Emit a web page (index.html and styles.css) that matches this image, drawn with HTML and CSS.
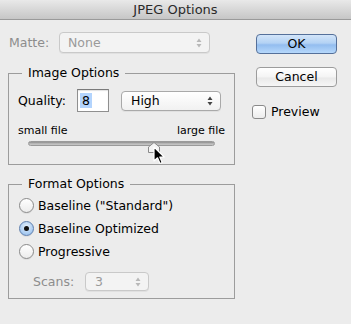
FILE: index.html
```html
<!DOCTYPE html>
<html>
<head>
<meta charset="utf-8">
<link rel="stylesheet" href="styles.css">
</head>
<body>
<div class="window">
  <div class="titlebar">JPEG Options</div>
  <div class="main">
    <div class="left">
      <div class="matte-row">
        <span class="lbl disabled">Matte:</span>
        <div class="select disabled matte-select">
          <span>None</span>
          <svg class="arrows" width="6" height="10" viewBox="0 0 6 10"><path d="M3 0.5 L5.5 4 L0.5 4 Z M3 9.5 L5.5 6 L0.5 6 Z" fill="#b8b8b8"/></svg>
        </div>
      </div>

      <fieldset class="group image-group">
        <legend>Image Options</legend>
        <div class="quality-row">
          <span class="lbl">Quality:</span>
          <div class="input"><span class="hl">8</span></div>
          <div class="select high-select">
            <span>High</span>
            <svg class="arrows" width="6" height="10" viewBox="0 0 6 10"><path d="M3 0.5 L5.5 4 L0.5 4 Z M3 9.5 L5.5 6 L0.5 6 Z" fill="#444"/></svg>
          </div>
        </div>
        <div class="scale"><span>small file</span><span>large file</span></div>
        <div class="slider">
          <div class="track"></div>
          <svg class="thumb" width="12" height="11" viewBox="0 0 12 11"><path d="M6 0.5 L11.5 5 L11.5 10.5 L0.5 10.5 L0.5 5 Z" fill="#f4f4f4" stroke="#8a8a8a"/></svg>
        </div>
      </fieldset>

      <fieldset class="group format-group">
        <legend>Format Options</legend>
        <div class="radio-row"><span class="radio"></span><span>Baseline ("Standard")</span></div>
        <div class="radio-row"><span class="radio on"><span class="dot"></span></span><span>Baseline Optimized</span></div>
        <div class="radio-row"><span class="radio"></span><span>Progressive</span></div>
        <div class="scans-row">
          <span class="lbl disabled">Scans:</span>
          <div class="select disabled scans-select">
            <span>3</span>
            <svg class="arrows" width="6" height="10" viewBox="0 0 6 10"><path d="M3 0.5 L5.5 4 L0.5 4 Z M3 9.5 L5.5 6 L0.5 6 Z" fill="#b8b8b8"/></svg>
          </div>
        </div>
      </fieldset>
    </div>

    <div class="right">
      <div class="btn ok">OK</div>
      <div class="btn cancel">Cancel</div>
      <div class="check-row"><span class="checkbox"></span><span>Preview</span></div>
    </div>
  </div>
  <svg class="cursor" width="13" height="19" viewBox="0 0 13 19"><path d="M1 1 L1 15 L4.5 11.8 L7 17.5 L9.2 16.5 L6.8 11 L11.2 11 Z" fill="#000" stroke="#fff" stroke-width="1.2" stroke-linejoin="round"/></svg>
</div>
</body>
</html>
```

FILE: styles.css
```css
* { box-sizing: border-box; }
html, body { margin: 0; padding: 0; }
body {
  width: 351px;
  height: 324px;
  background: #ececec;
  font-family: "DejaVu Sans", "Liberation Sans", sans-serif;
  font-size: 12.5px;
  color: #000;
  overflow: hidden;
}
.window {
  position: relative;
  width: 351px;
  height: 324px;
  background: #ececec;
}
.titlebar {
  height: 20px;
  line-height: 19px;
  text-align: center;
  font-size: 13px;
  color: #2a2a2a;
  background: linear-gradient(#e9e9e9, #d4d4d4 60%, #c6c6c6);
  border-bottom: 1px solid #9a9a9a;
}
.main {
  display: flex;
  padding-left: 8px;
}
.left {
  width: 227px;
  padding-top: 12px;
}
.right {
  margin-left: 17px;
  padding-top: 14px;
  display: flex;
  flex-direction: column;
  align-items: flex-start;
}
.lbl.disabled { color: #8d8d8d; }

.matte-row {
  display: flex;
  align-items: center;
  height: 21px;
  padding-left: 1px;
}
.matte-row .lbl { width: 50px; }

.select {
  display: flex;
  align-items: center;
  justify-content: space-between;
  border: 1px solid #a9a9a9;
  border-radius: 4px;
  background: linear-gradient(#ffffff, #f1f1f1);
  padding: 0 7px 0 8px;
  box-shadow: 0 1px 0 rgba(0,0,0,0.05);
}
.select.disabled {
  border-color: #c9c9c9;
  background: #f3f3f3;
  color: #9a9a9a;
}
.matte-select { width: 151px; height: 21px; }
.high-select { width: 100px; height: 20px; margin-left: 12px; padding-left: 9px; }
.scans-select { width: 64px; height: 19px; margin-left: 13px; padding-left: 9px; }

.group {
  margin: 12px 0 0 0;
  width: 227px;
  border: 1px solid #9c9c9c;
  border-radius: 0;
  padding: 8px 9px 10px 9px;
  min-width: 0;
}
.group legend {
  margin-left: 4px;
  padding: 0 6px;
  line-height: 16px;
  height: 16px;
  font-size: 12.5px;
}
.quality-row {
  display: flex;
  align-items: center;
  height: 23px;
}
.quality-row .lbl { width: 59px; }
.input {
  width: 32px;
  height: 23px;
  border: 1px solid #8f8f8f;
  border-top-color: #7a7a7a;
  background: #fff;
  padding: 3px 0 0 2px;
  box-shadow: inset 0 1px 1px rgba(0,0,0,0.12);
}
.hl {
  display: inline-block;
  background: #b3d4fd;
  padding: 0 2px;
  line-height: 15px;
}
.scale {
  display: flex;
  justify-content: space-between;
  margin-top: 12px;
  line-height: 14px;
  font-size: 11px;
}
.slider {
  position: relative;
  height: 16px;
  padding: 3px 10px 0 10px;
}
.track {
  height: 5px;
  border-radius: 3px;
  background: linear-gradient(#8e8e8e, #b4b4b4 50%, #c9c9c9);
  border: 1px solid #9a9a9a;
}
.thumb {
  position: absolute;
  left: 130px;
  top: 4px;
}

.format-group {
  margin-top: 11px;
  padding: 2px 9px 7px 9px;
}
.radio-row {
  display: flex;
  align-items: center;
  height: 23px;
  padding-left: 1px;
}
.radio {
  display: flex;
  align-items: center;
  justify-content: center;
  width: 15px;
  height: 15px;
  border-radius: 50%;
  border: 1px solid #8a8a8a;
  background: linear-gradient(#ffffff, #ececec);
  margin-right: 4px;
  box-shadow: 0 1px 0 rgba(0,0,0,0.06);
}
.radio.on {
  border-color: #5f7fae;
  background: radial-gradient(circle at 50% 35%, #e4f0fc, #a6c9f0 70%, #8db8ea);
}
.dot {
  width: 5px;
  height: 5px;
  border-radius: 50%;
  background: #111;
}
.scans-row {
  display: flex;
  align-items: center;
  margin-top: 9px;
  height: 19px;
  padding-left: 15px;
}
.scans-row .lbl { width: 39px; }

.btn {
  margin-left: 4px;
  width: 81px;
  height: 20px;
  border-radius: 4px;
  text-align: center;
  line-height: 18px;
  font-size: 12.5px;
}
.ok {
  border: 1px solid #55709a;
  background: linear-gradient(#d3e5f9, #b3d2f4 45%, #93bdef 55%, #b6d8fb);
  color: #000;
}
.cancel {
  margin-top: 13px;
  border: 1px solid #9c9c9c;
  background: linear-gradient(#ffffff, #f4f4f4 50%, #e9e9e9 55%, #f6f6f6);
}
.check-row {
  display: flex;
  align-items: center;
  margin-top: 17px;
  height: 15px;
}
.checkbox {
  width: 14px;
  height: 14px;
  border: 1px solid #8a8a8a;
  border-radius: 3px;
  background: linear-gradient(#ffffff, #ececec);
  margin-right: 5px;
}
.cursor {
  position: absolute;
  left: 153px;
  top: 146px;
}
```
